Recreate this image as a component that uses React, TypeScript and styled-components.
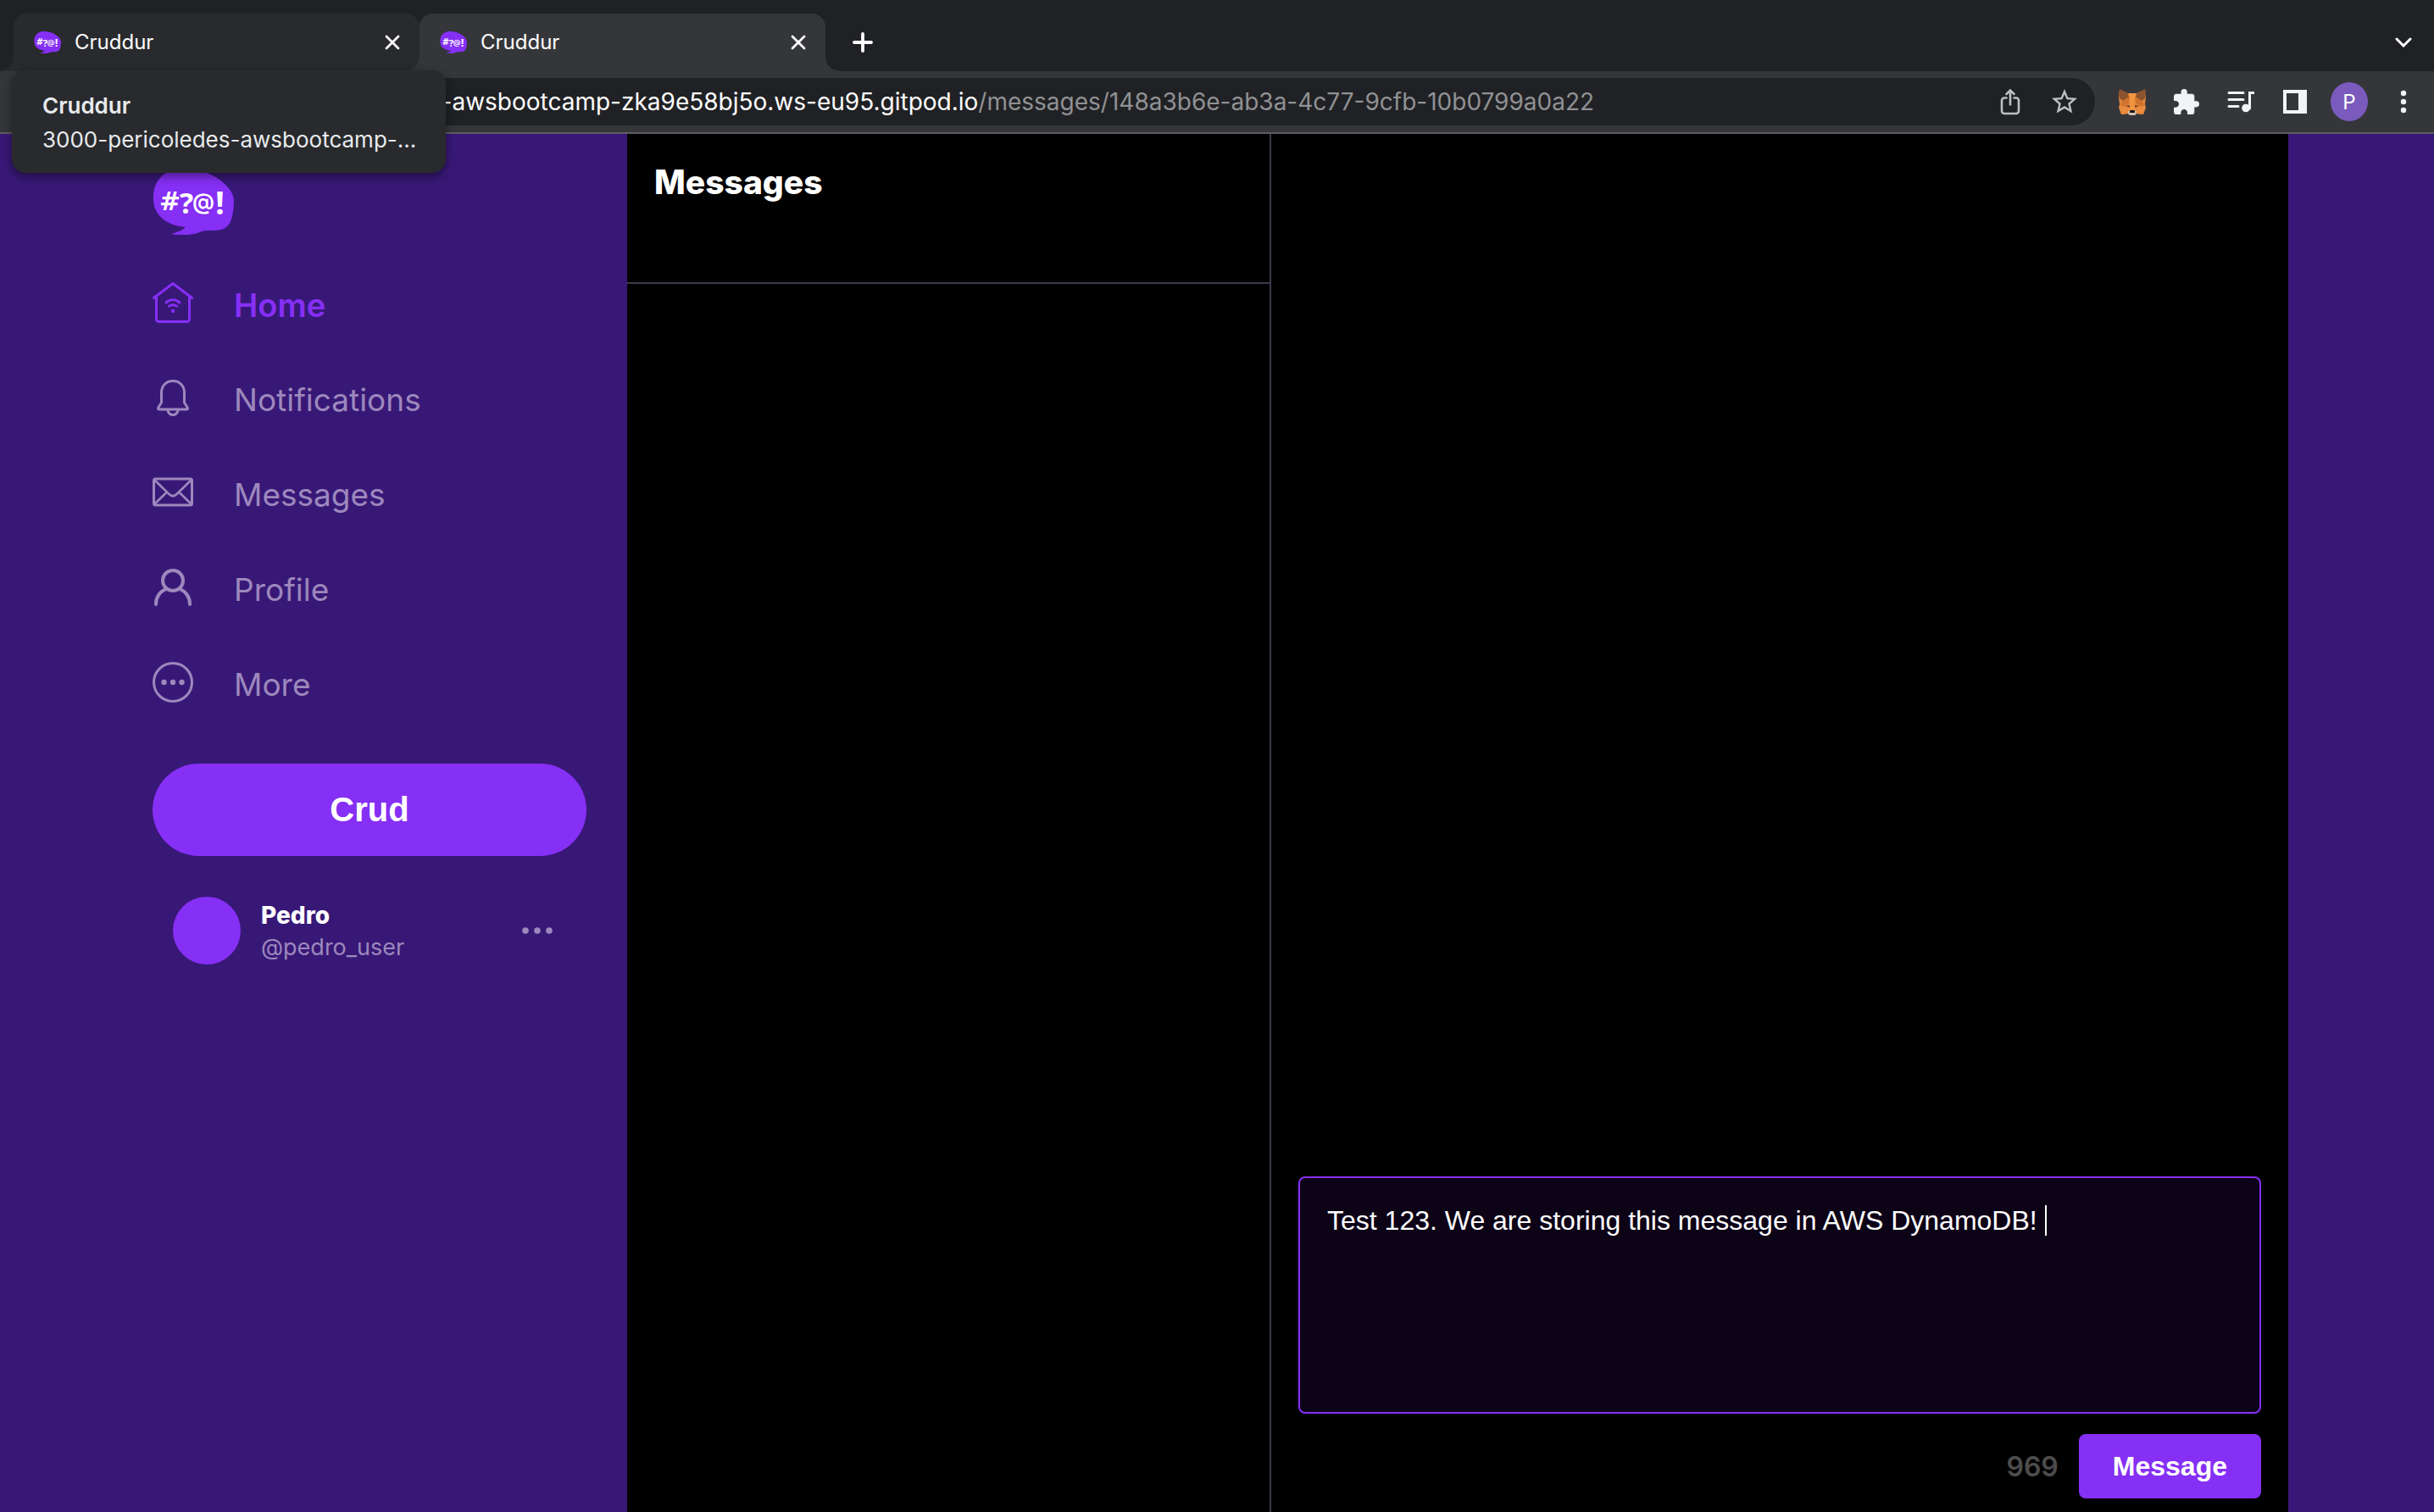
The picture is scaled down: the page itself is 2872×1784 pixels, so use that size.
import React, { useLayoutEffect, useRef, useState } from "react";
import styled, { createGlobalStyle, css } from "styled-components";

const ui = '"Inter", "Liberation Sans", sans-serif';
const arial = '"Liberation Sans", Arial, sans-serif';

const color = {
  strip: "#202124",
  toolbar: "#35363a",
  tabHover: "#292a2d",
  separator: "#5d5e62",
  page: "#381877",
  accent: "#862ff5",
  muted: "#9d88bd",
  divider: "#3b3b4d",
  field: "#0d0317",
};

const GlobalStyle = createGlobalStyle`
  *, *::before, *::after { box-sizing: border-box; }
  body { margin: 0; background: ${color.page}; font-family: ${ui}; }
  button { border: 0; padding: 0; background: none; color: inherit; cursor: pointer; }
  h1, p { margin: 0; }
  svg { display: block; flex: none; }
`;

const Screen = styled.div`
  position: relative;
  display: flex;
  flex-direction: column;
  min-height: 100vh;
`;

/* ---------- Browser chrome ---------- */

const TabStrip = styled.div`
  display: flex;
  align-items: flex-end;
  height: 84px;
  padding: 0 4px 0 16px;
  background: ${color.strip};
`;

const Tab = styled.div<{ $active?: boolean }>`
  --tab: ${(p) => (p.$active ? color.toolbar : color.tabHover)};
  position: relative;
  z-index: ${(p) => (p.$active ? 1 : 0)};
  display: flex;
  align-items: center;
  flex: 0 1 479px;
  height: 68px;
  padding: 0 12px 0 24px;
  gap: 16px;
  border-radius: 16px 16px 0 0;
  background: var(--tab);
  color: #fff;
  font-size: 24px;
  line-height: 32px;

  &::before,
  &::after {
    content: "";
    position: absolute;
    bottom: 0;
    width: 16px;
    height: 16px;
  }
  &::before {
    right: 100%;
    background: radial-gradient(circle at 0 0, transparent 15px, var(--tab) 16px);
  }
  &::after {
    left: 100%;
    background: radial-gradient(circle at 100% 0, transparent 15px, var(--tab) 16px);
  }
`;

const TabTitle = styled.span`
  flex: 1;
`;

const TabClose = styled.button`
  display: grid;
  place-items: center;
  width: 40px;
  height: 40px;
`;

const Slot = styled.button<{ $tone?: string }>`
  display: grid;
  place-items: center;
  flex: none;
  width: 64px;
  height: 56px;
  color: ${(p) => p.$tone ?? "#f1f3f4"};
`;

const StripSlot = styled(Slot)<{ $end?: boolean }>`
  height: 68px;
  ${(p) =>
    p.$end
      ? css`
          margin-left: auto;
        `
      : css`
          margin-left: 12px;
        `}
`;

const Toolbar = styled.div`
  display: flex;
  align-items: center;
  height: 74px;
  padding: 0 4px 0 208px;
  gap: 12px;
  background: ${color.toolbar};
  border-bottom: 2px solid ${color.separator};
`;

const Omnibox = styled.div`
  display: flex;
  align-items: center;
  flex: 1;
  min-width: 0;
  height: 56px;
  padding: 0 4px 0 74px;
  border-radius: 28px;
  background: ${color.strip};
`;

const Url = styled.span`
  flex: 1;
  min-width: 0;
  overflow: hidden;
  white-space: nowrap;
  color: #909194;
  font-size: 28px;
  line-height: 36px;
`;

const Host = styled.span`
  color: #fff;
`;

const Extensions = styled.div`
  display: flex;
  align-items: center;
`;

const ProfileBadge = styled.span`
  display: grid;
  place-items: center;
  width: 44px;
  height: 46px;
  border-radius: 50%;
  background: #7a5bbd;
  color: #fff;
  font-family: ${ui};
  font-size: 24px;
`;

const TabCard = styled.div`
  position: absolute;
  z-index: 5;
  top: 83px;
  left: 14px;
  width: 512px;
  padding: 22px 36px 19px;
  border-radius: 16px;
  background: ${color.tabHover};
  box-shadow: 0 4px 12px rgba(0, 0, 0, 0.45);
  color: #e8eaed;
  font-size: 26px;
  line-height: 40px;
`;

const TabCardTitle = styled.p`
  font-weight: 600;
`;

const TabCardUrl = styled.p`
  white-space: nowrap;
`;

/* ---------- Application ---------- */

const Page = styled.div`
  display: grid;
  grid-template-columns: 568px 760px minmax(0, 1fr);
  flex: 1;
  width: 100%;
  max-width: 2528px;
  margin: 0 auto;
`;

const Sidebar = styled.nav`
  display: flex;
  flex-direction: column;
  padding: 41px 48px 0 8px;
`;

const NavList = styled.div`
  display: flex;
  flex-direction: column;
  padding: 24px 0 40px;
`;

const NavLink = styled.a<{ $active?: boolean }>`
  display: flex;
  align-items: center;
  gap: 48px;
  height: 112px;
  color: ${(p) => (p.$active ? color.accent : color.muted)};
  font-size: ${(p) => (p.$active ? 38 : 37)}px;
  font-weight: ${(p) => (p.$active ? 600 : 400)};
  line-height: 48px;
  text-decoration: none;

  span {
    padding-top: 6px;
  }
`;

const CrudButton = styled.button`
  padding: 32px;
  border-radius: 55px;
  background: ${color.accent};
  color: #fff;
  font: 700 40px/45px ${arial};
`;

const UserCard = styled.button`
  display: flex;
  align-items: center;
  gap: 24px;
  margin-top: 48px;
  padding: 0 40px 0 24px;
  color: ${color.muted};
  font-family: ${ui};
  font-size: 27px;
  line-height: 37px;
  text-align: left;
`;

const Avatar = styled.span`
  width: 80px;
  height: 80px;
  border-radius: 50%;
  background: ${color.accent};
`;

const Identity = styled.span`
  display: flex;
  flex-direction: column;
  flex: 1;
  padding-top: 2px;
`;

const DisplayName = styled.span`
  color: #fff;
  font-size: 28px;
  font-weight: 800;
`;

const Groups = styled.section`
  background: #000;
  border-right: 2px solid ${color.divider};
`;

const GroupsHeader = styled.header`
  height: 177px;
  padding: 32px;
  border-bottom: 2px solid ${color.divider};
`;

const Heading = styled.h1`
  color: #fff;
  font-size: 39px;
  font-weight: 800;
  line-height: 50px;
`;

const Conversation = styled.main`
  display: flex;
  flex-direction: column;
  justify-content: flex-end;
  background: #000;
`;

const Composer = styled.form`
  display: flex;
  flex-direction: column;
  gap: 24px;
  padding: 0 32px 16px;
`;

const Field = styled.label`
  position: relative;
  display: block;
`;

const TextBox = styled.textarea`
  display: block;
  width: 100%;
  height: 280px;
  padding: 32px;
  border: 2px solid ${color.accent};
  border-radius: 8px;
  outline: 0;
  resize: none;
  background: ${color.field};
  color: #fff;
  caret-color: transparent;
  font: 400 32px/36px ${arial};
`;

const Caret = styled.span`
  position: absolute;
  top: 34px;
  width: 2px;
  height: 36px;
  background: #fff;
`;

const Actions = styled.div`
  display: flex;
  align-items: center;
  justify-content: flex-end;
  gap: 24px;
`;

const Remaining = styled.output`
  padding-top: 2px;
  color: #4c4c4c;
  font-size: 32px;
  font-weight: 600;
  line-height: 36px;
`;

const SendButton = styled.button`
  padding: 20px 40px;
  border-radius: 8px;
  background: ${color.accent};
  color: #fff;
  font: 700 32px/36px ${arial};
`;

/* ---------- Drawings ---------- */

const Logo = ({ size }: { size: number }) => (
  <svg width={size} height={(size * 78) / 96} viewBox="0 0 96 78" aria-hidden="true">
    <path
      fill={color.accent}
      d="M1 37C0 14 14 1 33 0c14-1 31 3 43 11 11 7 20 17 20 27 0 11-2 22-6 28-5 7-14 7-21 7-5 0-8 0-11 1-8 4-25 6-36 3 7-2 13-4 17-8C17 67 2 56 1 37Z"
    />
    <g fill="#fff" fontWeight="700">
      <text x="8" y="49" fontSize="30" fontFamily='"DejaVu Sans", sans-serif'>#</text>
      <text x="32" y="53" fontSize="34" fontFamily='"Open Sans", sans-serif'>?</text>
      <text x="47" y="48" fontSize="26" fontFamily={ui} fontWeight="600">@</text>
      <text x="74" y="54" fontSize="38" fontFamily='"Open Sans", sans-serif'>!</text>
    </g>
  </svg>
);

const Line = ({ children, width = 3 }: { children: React.ReactNode; width?: number }) => (
  <svg
    width="48"
    height="48"
    viewBox="0 0 48 48"
    fill="none"
    stroke="currentColor"
    strokeWidth={width}
    strokeLinecap="round"
    strokeLinejoin="round"
    aria-hidden="true"
  >
    {children}
  </svg>
);

const HomeIcon = () => (
  <Line>
    <path d="M1.500 18.500 24 1.500l22.500 17M4.500 17v26.500a3 3 0 0 0 3 3h33a3 3 0 0 0 3-3V17" />
    <path d="M16 24c5-4.300 11-4.300 16 0M19.500 28.200c3-2 6-2 9 0" />
    <circle cx="24" cy="34" r="2.200" fill="currentColor" stroke="none" />
  </Line>
);

const BellIcon = () => (
  <Line>
    <path d="M24 4.500c-8 0-13.500 6-13.500 13.500V30l-3.600 5.800c-.8 1.500-.2 2.200 1 2.200h32.200c1.200 0 1.800-.7 1-2.200L37.500 30V18C37.500 10.500 32 4.500 24 4.500Z" />
    <path d="M18 39.500c1 3.200 3 5 6 5s5-1.800 6-5" />
  </Line>
);

const MailIcon = () => (
  <Line>
    <rect x="1.500" y="8" width="45" height="31" rx="2" />
    <path d="m3 10 16.500 16c2.800 2.800 6.200 2.800 9 0L45 10M3 37l13.500-13M45 37 31.500 24" strokeWidth="2.600" />
  </Line>
);

const PersonIcon = () => (
  <Line width={4}>
    <circle cx="24" cy="16" r="12" />
    <path d="M4 44c0-8 4.500-14.500 11.500-18M44 44c0-8-4.500-14.500-11.500-18" />
  </Line>
);

const MoreIcon = () => (
  <Line>
    <circle cx="24" cy="24" r="22.500" />
    <g fill="currentColor" stroke="none">
      <circle cx="13.500" cy="24" r="3.200" />
      <circle cx="24" cy="24" r="3.200" />
      <circle cx="34.500" cy="24" r="3.200" />
    </g>
  </Line>
);

const DotsIcon = () => (
  <svg width="36" height="8" viewBox="0 0 36 8" fill="currentColor" aria-hidden="true">
    <circle cx="4" cy="4" r="3.800" />
    <circle cx="18" cy="4" r="3.800" />
    <circle cx="32" cy="4" r="3.800" />
  </svg>
);

const CloseIcon = () => (
  <svg width="18" height="18" viewBox="0 0 18 18" stroke="#fff" strokeWidth="2.800" strokeLinecap="round" aria-hidden="true">
    <path d="m2 2 14 14M16 2 2 16" />
  </svg>
);

const PlusIcon = () => (
  <svg width="24" height="24" viewBox="0 0 24 24" stroke="#fff" strokeWidth="3.800" strokeLinecap="round" aria-hidden="true">
    <path d="M12 2v20M2 12h20" />
  </svg>
);

const ChevronIcon = () => (
  <svg width="20" height="12" viewBox="0 0 20 12" fill="none" stroke="#fff" strokeWidth="3" strokeLinecap="round" aria-hidden="true">
    <path d="m2 2 8 8 8-8" />
  </svg>
);

const ShareIcon = () => (
  <svg width="24" height="32" viewBox="0 0 24 32" fill="none" stroke="currentColor" strokeWidth="2.600" strokeLinecap="round" aria-hidden="true">
    <path d="M7.500 11.500H5a3 3 0 0 0-3 3v12.500a3 3 0 0 0 3 3h14a3 3 0 0 0 3-3V14.500a3 3 0 0 0-3-3h-2.500" />
    <path d="M12 19.500V3M7.500 7 12 2.500 16.500 7" />
  </svg>
);

const StarIcon = () => (
  <svg width="30" height="30" viewBox="2 2 20 20" fill="currentColor" aria-hidden="true">
    <path d="m22 9.240-7.190-.62L12 2 9.190 8.630 2 9.240l5.460 4.730L5.820 21 12 17.270 18.180 21l-1.630-7.030L22 9.240ZM12 15.400l-3.760 2.270 1-4.280-3.320-2.880 4.380-.38L12 6.100l1.710 4.040 4.380.38-3.320 2.880 1 4.280L12 15.400Z" />
  </svg>
);

const FoxIcon = () => (
  <svg width="32" height="31" viewBox="0 0 32 31" aria-hidden="true">
    <path fill="#e2863c" d="M1 1l10 4h10L31 1l1 9-1 8 1 4-3 8-8-1-2 2h-6l-2-2-8 1-3-8 1-4-1-8z" />
    <path fill="#8d532e" d="M1 0l10 5 2 4-8 5-4-3-1-5zM31 0L21 5l-2 4 8 5 4-3 1-5z" />
    <path fill="#f09440" d="M11 5h10l-2 8 1 12h-8l1-12z" />
    <path fill="#d0732f" d="M5 14l8-5-1 8-6 4-5-3zM27 14l-8-5 1 8 6 4 5-3z" />
    <path fill="#e98a3d" d="M1 21l8-1 3 5-1 4-8 1zM31 21l-8-1-3 5 1 4 8 1z" />
    <path fill="#7d3f24" d="M8 20l5-1v3zM24 20l-5-1v3z" />
    <path fill="#cfc0b2" d="M11 26h10v3l-2 2h-6l-2-2z" />
    <path fill="#161616" d="M13.500 25h5l.7 3h-6.400z" />
  </svg>
);

const PuzzleIcon = () => (
  <svg width="30" height="30" viewBox="2 1 21 21" fill="currentColor" aria-hidden="true">
    <path d="M20.500 11H19V7c0-1.100-.9-2-2-2h-4V3.500a2.500 2.500 0 0 0-5 0V5H4c-1.100 0-1.990.9-1.990 2v3.800H3.500c1.490 0 2.700 1.210 2.700 2.700s-1.210 2.700-2.700 2.700H2V20c0 1.100.9 2 2 2h3.800v-1.500c0-1.490 1.210-2.700 2.700-2.700s2.700 1.210 2.700 2.700V22H17c1.100 0 2-.9 2-2v-4h1.500a2.500 2.500 0 0 0 0-5Z" />
  </svg>
);

const PlaylistIcon = () => (
  <svg width="32" height="26" viewBox="0 0 32 26" fill="none" stroke="currentColor" strokeWidth="3" strokeLinecap="round" aria-hidden="true">
    <path d="M2 2.500h17M2 10.500h17M2 18.500h11M31 2.500h-4.500V21" />
    <circle cx="22" cy="20.500" r="4.800" fill="currentColor" stroke="none" />
  </svg>
);

const PanelIcon = () => (
  <svg width="28" height="28" viewBox="0 0 28 28" fill="currentColor" fillRule="evenodd" aria-hidden="true">
    <path d="M0 0h28v28H0zM4 4v20h14V4z" />
  </svg>
);

const KebabIcon = () => (
  <svg width="8" height="28" viewBox="0 0 8 28" fill="currentColor" aria-hidden="true">
    <circle cx="4" cy="4" r="3.200" />
    <circle cx="4" cy="14" r="3.200" />
    <circle cx="4" cy="24" r="3.200" />
  </svg>
);

/* ---------- Screen ---------- */

const navItems = [
  { label: "Home", Icon: HomeIcon, active: true },
  { label: "Notifications", Icon: BellIcon },
  { label: "Messages", Icon: MailIcon },
  { label: "Profile", Icon: PersonIcon },
  { label: "More", Icon: MoreIcon },
];

const MAX_LENGTH = 1024;
const DRAFT = "Test 123. We are storing this message in AWS DynamoDB! ";

function MessageForm() {
  const [message, setMessage] = useState(DRAFT);
  const [caret, setCaret] = useState(0);
  const box = useRef<HTMLTextAreaElement>(null);

  useLayoutEffect(() => {
    const context = document.createElement("canvas").getContext("2d");
    if (!context || !box.current) return;
    const style = getComputedStyle(box.current);
    context.font = `${style.fontSize} ${style.fontFamily}`;
    const inset = parseFloat(style.paddingLeft) + parseFloat(style.borderLeftWidth);
    setCaret(Math.floor(inset + context.measureText(message).width) - 1);
  }, [message]);

  return (
    <Composer onSubmit={(event) => event.preventDefault()}>
      <Field>
        <TextBox
          ref={box}
          aria-label="Message"
          spellCheck={false}
          value={message}
          onChange={(event) => setMessage(event.target.value)}
        />
        <Caret style={{ left: caret }} />
      </Field>
      <Actions>
        <Remaining>{MAX_LENGTH - message.length}</Remaining>
        <SendButton type="submit">Message</SendButton>
      </Actions>
    </Composer>
  );
}

export default function App() {
  return (
    <Screen>
      <GlobalStyle />
      <TabStrip>
        {[false, true].map((active) => (
          <Tab key={String(active)} $active={active}>
            <Logo size={32} />
            <TabTitle>Cruddur</TabTitle>
            <TabClose aria-label="Close tab">
              <CloseIcon />
            </TabClose>
          </Tab>
        ))}
        <StripSlot aria-label="New tab">
          <PlusIcon />
        </StripSlot>
        <StripSlot $end aria-label="Search tabs">
          <ChevronIcon />
        </StripSlot>
      </TabStrip>
      <Toolbar>
        <Omnibox>
          <Url>
            <Host>3000-pericoledes-awsbootcamp-zka9e58bj5o.ws-eu95.gitpod.io</Host>
            /messages/148a3b6e-ab3a-4c77-9cfb-10b0799a0a22
          </Url>
          <Slot $tone="#bdbebf" aria-label="Share">
            <ShareIcon />
          </Slot>
          <Slot $tone="#bdbebf" aria-label="Bookmark">
            <StarIcon />
          </Slot>
        </Omnibox>
        <Extensions>
          <Slot aria-label="MetaMask">
            <FoxIcon />
          </Slot>
          <Slot aria-label="Extensions">
            <PuzzleIcon />
          </Slot>
          <Slot aria-label="Media controls">
            <PlaylistIcon />
          </Slot>
          <Slot aria-label="Side panel">
            <PanelIcon />
          </Slot>
          <Slot aria-label="Profile">
            <ProfileBadge>P</ProfileBadge>
          </Slot>
          <Slot aria-label="Menu">
            <KebabIcon />
          </Slot>
        </Extensions>
      </Toolbar>
      <TabCard role="tooltip">
        <TabCardTitle>Cruddur</TabCardTitle>
        <TabCardUrl>3000-pericoledes-awsbootcamp-...</TabCardUrl>
      </TabCard>
      <Page>
        <Sidebar>
          <Logo size={96} />
          <NavList>
            {navItems.map(({ label, Icon, active }) => (
              <NavLink key={label} href="#" $active={active}>
                <Icon />
                <span>{label}</span>
              </NavLink>
            ))}
          </NavList>
          <CrudButton>Crud</CrudButton>
          <UserCard>
            <Avatar />
            <Identity>
              <DisplayName>Pedro</DisplayName>
              <span>@pedro_user</span>
            </Identity>
            <DotsIcon />
          </UserCard>
        </Sidebar>
        <Groups>
          <GroupsHeader>
            <Heading>Messages</Heading>
          </GroupsHeader>
        </Groups>
        <Conversation>
          <MessageForm />
        </Conversation>
      </Page>
    </Screen>
  );
}
